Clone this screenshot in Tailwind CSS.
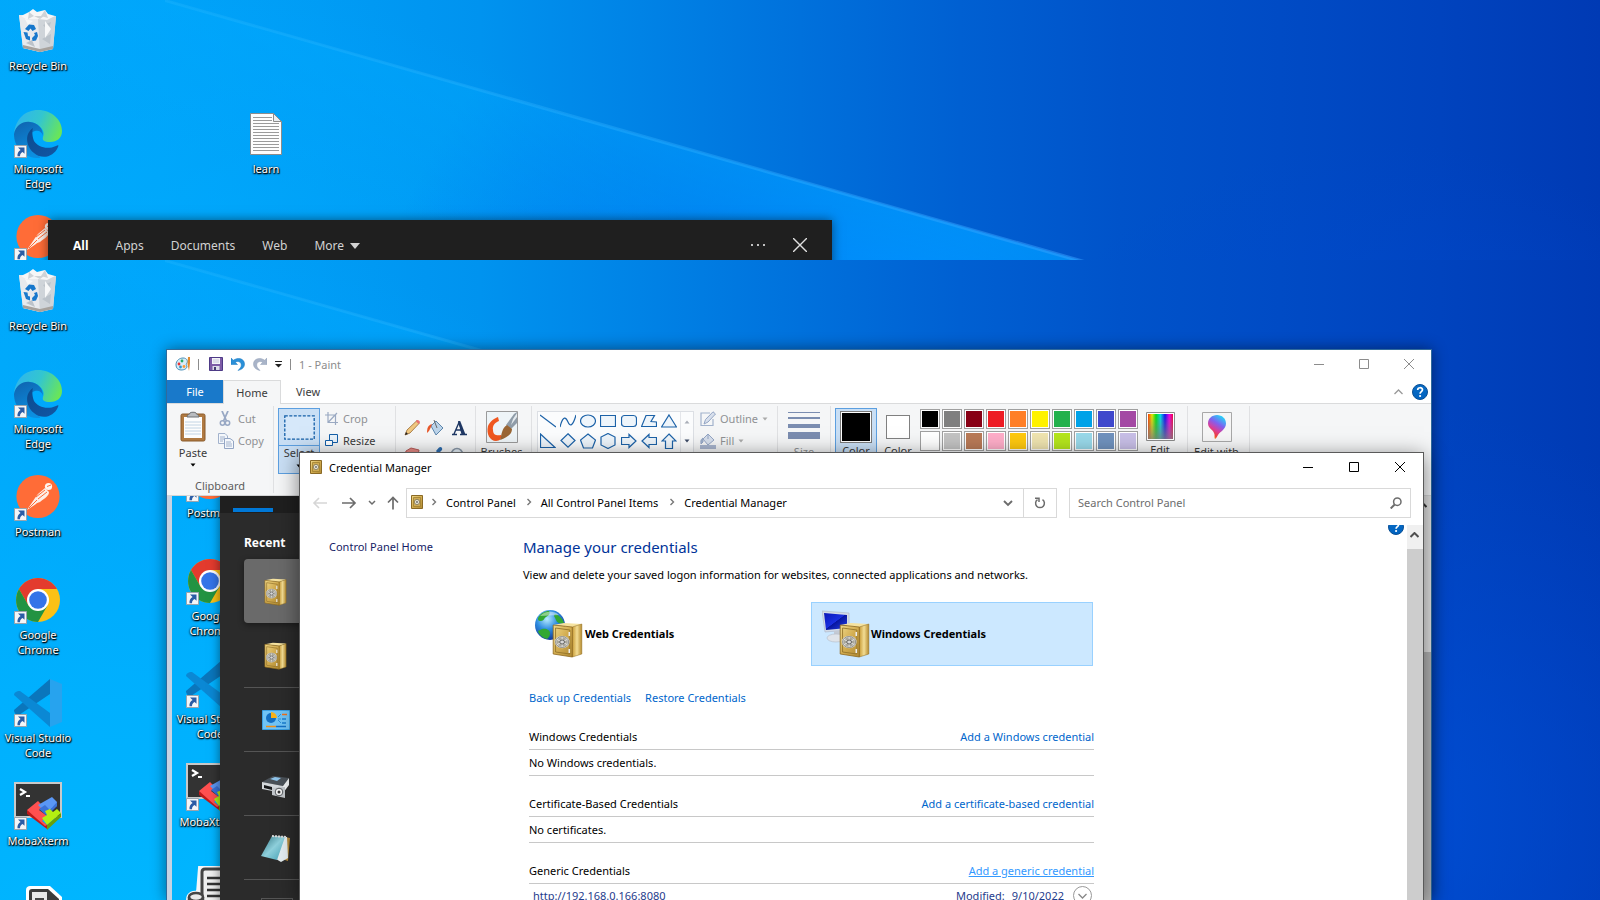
<!DOCTYPE html>
<html lang="en">
<head>
<meta charset="utf-8">
<title>Desktop</title>
<script src="https://cdn.jsdelivr.net/npm/@tailwindcss/browser@4"></script>
</head>
<body class="h-screen overflow-hidden flex flex-col font-['Noto_Sans','Open_Sans',sans-serif] text-[11px] leading-[15px] text-black">

<svg class="absolute size-0" aria-hidden="true">
  <defs>
    <linearGradient id="sky" x1="0" y1="0" x2="1" y2="0">
      <stop offset="0" stop-color="#00a8fa"/><stop offset=".1" stop-color="#00a3f9"/><stop offset=".2" stop-color="#009cf5"/><stop offset=".3" stop-color="#0093ef"/>
      <stop offset=".4" stop-color="#0083e6"/><stop offset=".5" stop-color="#0071dc"/><stop offset=".6" stop-color="#0060d2"/><stop offset=".7" stop-color="#0053ca"/>
      <stop offset=".8" stop-color="#004bc5"/><stop offset=".9" stop-color="#0043be"/><stop offset="1" stop-color="#003ab4"/>
    </linearGradient>
    <radialGradient id="glow" gradientUnits="userSpaceOnUse" cx="900" cy="420" r="540"><stop offset="0" stop-color="#0090ff"/><stop offset=".3" stop-color="#008aff" stop-opacity=".85"/><stop offset=".65" stop-color="#007af8" stop-opacity=".4"/><stop offset="1" stop-color="#0060f0" stop-opacity="0"/></radialGradient>
    <radialGradient id="east" gradientUnits="userSpaceOnUse" cx="1380" cy="560" r="420"><stop offset="0" stop-color="#0050d8" stop-opacity=".8"/><stop offset="1" stop-color="#0048d0" stop-opacity="0"/></radialGradient>
    <radialGradient id="cyan" gradientUnits="userSpaceOnUse" cx="120" cy="720" r="760"><stop offset="0" stop-color="#00b8ff"/><stop offset=".4" stop-color="#00b2ff" stop-opacity=".8"/><stop offset="1" stop-color="#00aaff" stop-opacity="0"/></radialGradient>
    <linearGradient id="ray" x1="0" y1="0" x2="1" y2="0"><stop offset="0" stop-color="#3cc0ff" stop-opacity=".2"/><stop offset=".5" stop-color="#30b0ff" stop-opacity=".4"/><stop offset=".85" stop-color="#38a0ff" stop-opacity=".5"/><stop offset="1" stop-color="#3090ff" stop-opacity="0"/></linearGradient>
    <linearGradient id="below" gradientUnits="userSpaceOnUse" x1="520" y1="100" x2="480" y2="240"><stop offset="0" stop-color="#00aaff" stop-opacity=".4"/><stop offset="1" stop-color="#00aaff" stop-opacity="0"/></linearGradient>
    <linearGradient id="e1" x1="0" y1=".3" x2="1" y2=".6"><stop offset="0" stop-color="#2fb5ee"/><stop offset=".5" stop-color="#33c6cf"/><stop offset="1" stop-color="#6be656"/></linearGradient>
    <linearGradient id="e2" x1="0" y1="0" x2=".4" y2="1"><stop offset="0" stop-color="#0f62ad"/><stop offset="1" stop-color="#0c8fe0"/></linearGradient>
    <linearGradient id="e3" x1="0" y1="0" x2="1" y2="1"><stop offset="0" stop-color="#0b4b8f"/><stop offset="1" stop-color="#1257a5"/></linearGradient>
    <linearGradient id="gold" x1="0" y1="0" x2="1" y2="1"><stop offset="0" stop-color="#f0d888"/><stop offset=".5" stop-color="#d2ac50"/><stop offset="1" stop-color="#b08a34"/></linearGradient>
    <linearGradient id="goldside" x1="0" y1="0" x2="1" y2="0"><stop offset="0" stop-color="#c79a35"/><stop offset=".5" stop-color="#f3dd94"/><stop offset="1" stop-color="#b68b2f"/></linearGradient>
    <radialGradient id="globe" cx=".4" cy=".3" r=".7"><stop offset="0" stop-color="#b8ecff"/><stop offset=".5" stop-color="#2f8de0"/><stop offset="1" stop-color="#123c9c"/></radialGradient>
    <linearGradient id="screen" x1="0" y1="0" x2="1" y2="1"><stop offset="0" stop-color="#0a17b8"/><stop offset=".5" stop-color="#1a2fe0"/><stop offset=".52" stop-color="#0715a0"/><stop offset="1" stop-color="#2842e8"/></linearGradient>
    <linearGradient id="rainbow" x1="0" y1="0" x2="1" y2="0"><stop offset="0" stop-color="#ff3a00"/><stop offset=".16" stop-color="#e8e800"/><stop offset=".32" stop-color="#00e010"/><stop offset=".5" stop-color="#00d8e8"/><stop offset=".68" stop-color="#1010f0"/><stop offset=".85" stop-color="#f000e8"/><stop offset="1" stop-color="#f00040"/></linearGradient>
    <linearGradient id="fade" x1="0" y1="0" x2="0" y2="1"><stop offset="0" stop-color="#808080" stop-opacity="0"/><stop offset="1" stop-color="#808080" stop-opacity=".8"/></linearGradient>
    <linearGradient id="drop" x1=".2" y1="1" x2=".7" y2="0"><stop offset="0" stop-color="#f7b500"/><stop offset=".2" stop-color="#f0413c"/><stop offset=".4" stop-color="#d8409c"/><stop offset=".65" stop-color="#8060f0"/><stop offset="1" stop-color="#20d8f8"/></linearGradient>
    <linearGradient id="note" x1="0" y1="0" x2="1" y2="1"><stop offset="0" stop-color="#2a6f7c"/><stop offset=".5" stop-color="#8fd0dc"/><stop offset="1" stop-color="#3f9fb4"/></linearGradient>
    <linearGradient id="help" x1="0" y1="0" x2="0" y2="1"><stop offset="0" stop-color="#0a6cc4"/><stop offset="1" stop-color="#0062c0"/></linearGradient>
  </defs>
  <symbol id="wallpaper" viewBox="0 0 1600 900" preserveAspectRatio="none">
    <rect width="1600" height="900" fill="url(#sky)"/>
    <rect width="1600" height="900" fill="url(#cyan)"/>
    <rect width="1600" height="900" fill="url(#east)"/>
    <path d="M165 0 L1600 408 V900 H0 V0Z" fill="url(#glow)"/>
    <path d="M165 0 L1078 260 L1000 400 H0 V0Z" fill="url(#below)"/>
    <path d="M165 -1 L1250 307 V311 L165 2Z" fill="url(#ray)"/>
  </symbol>
  <symbol id="shortcut" viewBox="0 0 13 13"><path d="M.5.5h12v12H.5z" fill="#f4f6f8" stroke="#9aa4ad"/><path d="M4 2.500h6.500v6.300L8.600 6.900C6.800 7.800 6 9 6 11.300H3.500C3.200 8 4.400 6 6.600 4.900z" fill="#2b5ca5"/></symbol>
  <symbol id="bin" viewBox="0 0 48 48">
    <path d="M5 8 L42 9 L39 42 L26 45 L9 41Z" fill="#dfe3e7"/><path d="M5 8 L24 12 L26 45 L9 41Z" fill="#e8eaed"/><path d="M24 12 L42 9 L39 42 L26 45Z" fill="#cfd4d9"/>
    <path d="M29 18l8-3-3 9zM28 32l9-5-1 10zM12 36l6-3 3 7z" fill="#bcc3ca"/><path d="M31 14l6 8-6 9zM11 12l8 2-5 4z" fill="#f7f8f9"/>
    <path d="M9 38 L26 42 L39 39 L39 42 L26 45 L9 41Z" fill="#a7a29d"/>
    <path d="M7 9 L15 5 L19 2 L23 5 L31 3 L34 7 L41 9 L33 13 L24 12 L12 12Z" fill="#f5f6f7"/><path d="M15 5l5 4-6 3zM31 3l-4 6 7 2zM20 9l6 3 4-3z" fill="#cdd2d6"/>
    <path d="M11 22l4-4.500 5 .5 2 4-3.500 2-2-2.500-2 2.500zM9.500 25l4 .5.500 3.500 2 .5v4l-4-1.500zM18 31l3-3-1-2 3-1 1 4-2 4.500-3.500.5z" fill="#1878cc"/>
  </symbol>
  <symbol id="edge" viewBox="0 0 48 48">
    <path d="M0 23C2 9 11 0 24 0c14 0 24 10 24 21 0 7-5 11-12 11-6 0-8-2-7-5 2-5-1-9-5-12C16 9 4 12 0 23z" fill="url(#e1)"/>
    <path d="M0 24C2 15 9 11 16 12c8 1 13 6 13 14-1-4-4-6-8-5-7 2-9 13-1 21 3 3 7 5 6 6C11 49 0 38 0 24z" fill="url(#e2)"/>
    <path d="M19 18c-9 6-7 19 1 25 8 7 20 4 24-6 1-2 0-2-2-1-9 4-18 1-22-5-2-5-2-10-1-13z" fill="url(#e3)"/>
  </symbol>
  <symbol id="postman" viewBox="0 0 48 48">
    <circle cx="24" cy="23.500" r="21.600" fill="#ff6c37"/><circle cx="34.500" cy="13.500" r="3.600" fill="#fff4ee"/>
    <path d="M31 15l4 4c0 4-4 6-9 10-2 1-4 1-4 2l-9 6 8-12 3-4z" fill="#fdeee7"/><path d="M22 24l9-7M24 26l9-7M15 35l8-8" stroke="#ff6c37" stroke-width="1"/><path d="M33 13.500l4-1.500" stroke="#ff6c37"/>
  </symbol>
  <symbol id="chrome" viewBox="0 0 48 48">
    <circle cx="24" cy="24" r="22" fill="#fbc116"/><path d="M5 13A22 22 0 0 1 43 13H24L14.500 29.500z" fill="#e33b2e"/>
    <path d="M5 13A22 22 0 0 0 24 46L33.500 29.500H14.500z" fill="#229342"/><circle cx="24" cy="24" r="11" fill="#fff"/><circle cx="24" cy="24" r="8.800" fill="#3474e8"/>
  </symbol>
  <symbol id="vscode" viewBox="0 0 48 48">
    <path d="M36 0V15L5 36C2 36 0 34 0 31z" fill="#0a76bc"/><path d="M36 48V34L6 12C2 12 0 14 0 16z" fill="#0b88d4"/><path d="M36 0L48 5v38L36 48z" fill="#27a3ee"/>
  </symbol>
  <symbol id="moba" viewBox="0 0 48 48">
    <path d="M1 1H47V35H1z" fill="#333" stroke="#c9c9c9" stroke-width="2"/><path d="M6 7l5 3-5 3" fill="none" stroke="#fff" stroke-width="2.200"/><path d="M12 14h4" stroke="#fff" stroke-width="2"/>
    <path d="M13 28V32L33 47V43z" fill="#c01818"/><path d="M13 28L24 19 29 24 25 28 33 34 28 39 33 43 31 44z" fill="#ff5050"/><path d="M24 23L38 15 43 20V24L31 30z" fill="#5a97f5"/><path d="M25 27L31 23 36 28 43 20V24L33 34z" fill="#3a72d8"/>
    <path d="M28 36L33 33 31 29 36 27 39 30 43 27 47 31 33 43z" fill="#b4f011"/><path d="M33 43L47 31V35L33 48z" fill="#6aa008"/>
  </symbol>
  <symbol id="script" viewBox="0 0 48 48">
    <path d="M14 2H44V48H2V34C2 27 8 26 12 27z" fill="#f2f2f2" stroke="#f4f6f8" stroke-width="4"/><path d="M16 48V6C16 4 17 3 19 3H46V48z" fill="#efefef" stroke="#444" stroke-width="3"/>
    <path d="M21 12h20M21 18h20M21 24h20M21 30h20" stroke="#333" stroke-width="2.500"/><ellipse cx="10" cy="31" rx="7" ry="4" fill="#e8e8e8" stroke="#444" stroke-width="2.500"/><path d="M3 31v17M17 31v17" stroke="#444" stroke-width="2.500"/>
  </symbol>
  <symbol id="drive" viewBox="0 0 48 48">
    <path d="M12 5C12 2 14 1 16 1H36L48 12V48H12z" fill="#fff"/><path d="M15 7C15 5 16 4 18 4H34L45 14V48H15z" fill="#3c3c3c"/><path d="M18 7H33V30H18z" fill="#e9e9e9"/><path d="M21 13H30V30H21z" fill="#444"/>
  </symbol>
  <symbol id="textdoc" viewBox="0 0 32 42">
    <path d="M.5.500H23.500L31.500 8.500V41.500H.5z" fill="#fdfdfd" stroke="#8c8c8c"/><path d="M23.500.500V8.500H31.500z" fill="#e9eef2" stroke="#8c8c8c"/>
    <path d="M3 4.500h19M3 7.500h19M3 10.500h26M3 13.500h26M3 16.500h26M3 19.500h26M3 22.500h26M3 25.500h26M3 28.500h26M3 31.500h26M3 34.500h26M3 37.500h26" stroke="#9a9a9a"/>
  </symbol>
  <symbol id="safe" viewBox="0 0 26 36" preserveAspectRatio="none">
    <path d="M1 3L10 1 25 2 17 5z" fill="#f6e3a0"/><path d="M17 5L25 2V32L17 35z" fill="url(#goldside)" stroke="#94701e" stroke-width=".5"/><path d="M1 3L17 5V35L1 32z" fill="url(#gold)" stroke="#8a6417" stroke-width=".7"/><path d="M3 6L15 8V32L3 30z" fill="none" stroke="#94732a" stroke-width=".8"/>
    <circle cx="8.500" cy="20" r="5.500" fill="#a9a79c" stroke="#dededa" stroke-width="1.500"/><path d="M8.500 14v12M3.500 17l10 6M3.500 23l10-6" stroke="#ececec" stroke-width=".8"/><circle cx="8.500" cy="20" r="5.500" fill="none" stroke="#6d6a60" stroke-width=".6"/><circle cx="8.500" cy="20" r="2" fill="#d9d9d9" stroke="#555" stroke-width=".8"/><path d="M14.500 10v4M14.500 27v4" stroke="#eee" stroke-width="1.300"/>
  </symbol>
  <symbol id="vault" viewBox="0 0 14 14"><path d="M1.500.500h11v13h-11z" fill="url(#gold)" stroke="#8a6a26"/><path d="M3.500 2.500h7v9h-7z" fill="#cfab54" stroke="#a08030" stroke-width=".8"/><circle cx="7" cy="7" r="2.600" fill="#e9e4d2" stroke="#7c7355" stroke-width=".8"/><circle cx="7" cy="7" r=".9" fill="#666"/></symbol>
  <symbol id="helpicon" viewBox="0 0 16 16"><circle cx="8" cy="8" r="7.500" fill="url(#help)" stroke="#0a4f94"/><path d="M5.700 6C5.700 3 10.500 3 10.500 5.800 10.500 7.600 8.100 7.600 8.100 9.700" fill="none" stroke="#fff" stroke-width="1.700"/><circle cx="8.100" cy="12" r="1.100" fill="#fff"/></symbol>
  <symbol id="min" viewBox="0 0 10 10"><path d="M0 5.500H10" stroke="currentColor"/></symbol>
  <symbol id="max" viewBox="0 0 10 10"><path d="M.5.500h9v9h-9z" fill="none" stroke="currentColor"/></symbol>
  <symbol id="close" viewBox="0 0 10 10"><path d="M0 0L10 10M10 0L0 10" stroke="currentColor"/></symbol>
  <symbol id="down" viewBox="0 0 6 4"><path d="M.5.500H5.500L3 3.500z" fill="currentColor"/></symbol>
  <symbol id="chev" viewBox="0 0 6 8"><path d="M1.500 1L4.500 4 1.500 7" fill="none" stroke="#777" stroke-width="1.400"/></symbol>
</svg>

<template id="icons">
  <button class="h-[103px] w-[76px] shrink-0 pt-[7px] flex flex-col items-center gap-[3px]"><svg class="size-12"><use href="#bin"/></svg><span>Recycle Bin</span></button>
  <button class="h-[103px] w-[76px] shrink-0 pt-[7px] flex flex-col items-center gap-[3px]"><svg class="size-12"><use href="#edge"/><use href="#shortcut" y="35" width="13" height="13"/></svg><span>Microsoft<br>Edge</span></button>
  <button class="h-[103px] w-[76px] shrink-0 pt-[7px] flex flex-col items-center gap-[3px]"><svg class="size-12"><use href="#postman"/><use href="#shortcut" y="35" width="13" height="13"/></svg><span>Postman</span></button>
  <button class="h-[103px] w-[76px] shrink-0 pt-[7px] flex flex-col items-center gap-[3px]"><svg class="size-12"><use href="#chrome"/><use href="#shortcut" y="35" width="13" height="13"/></svg><span>Google<br>Chrome</span></button>
  <button class="h-[103px] w-[76px] shrink-0 pt-[7px] flex flex-col items-center gap-[3px]"><svg class="size-12"><use href="#vscode"/><use href="#shortcut" y="35" width="13" height="13"/></svg><span>Visual Studio<br>Code</span></button>
  <button class="h-[103px] w-[76px] shrink-0 pt-[7px] flex flex-col items-center gap-[3px]"><svg class="size-12"><use href="#moba"/><use href="#shortcut" y="35" width="13" height="13"/></svg><span>MobaXterm</span></button>
</template>

<!-- Upper desktop with the search flyout -->
<section class="relative h-[260px] shrink-0 overflow-hidden">
  <svg class="absolute inset-x-0 top-0 h-[900px] w-full"><use href="#wallpaper"/></svg>
  <div data-from="0" data-to="3" class="absolute left-0 top-0 flex flex-col text-white [&_span]:[text-shadow:1px_1px_1px_#000,0_1px_2px_#000,0_0_2px_rgba(0,0,0,.7)]"></div>
  <button class="absolute left-[228px] top-[103px] h-[103px] w-[76px] pt-[10px] flex flex-col items-center gap-[6px] text-white [text-shadow:1px_1px_1px_#000,0_1px_2px_#000,0_0_2px_rgba(0,0,0,.7)]"><svg class="h-[42px] w-8"><use href="#textdoc"/></svg><span>learn</span></button>
  <nav class="absolute left-12 top-[220px] w-[784px] h-[60px] bg-[#1f1f1f] shadow-[0_0_10px_rgba(0,0,0,.5)] px-[25px] flex items-start gap-[27px] text-[12px] leading-[51px] text-[#d2d2d2]">
    <button class="font-bold text-white">All</button><button>Apps</button><button>Documents</button><button>Web</button>
    <button class="flex items-center gap-[6px]">More <svg class="h-[6px] w-[10px]" viewBox="0 0 10 6"><path d="M0 0H10L5 6z" fill="#d2d2d2"/></svg></button>
    <button class="ml-auto h-[50px]" aria-label="More options"><svg class="h-[2px] w-4" viewBox="0 0 16 2"><path d="M1 0h2v2H1zM7 0h2v2H7zM13 0h2v2h-2z" fill="#c0c0c0"/></svg></button>
    <button class="h-[50px]" aria-label="Close search"><svg class="size-[14px] text-[#e0e0e0]"><use href="#close"/></svg></button>
  </nav>
</section>

<!-- Lower desktop -->
<section class="relative flex-1 min-h-0 overflow-hidden">
  <svg class="absolute inset-x-0 top-0 h-[900px] w-full"><use href="#wallpaper"/></svg>
  <div class="absolute left-0 top-0 flex flex-col text-white [&_span]:[text-shadow:1px_1px_1px_#000,0_1px_2px_#000,0_0_2px_rgba(0,0,0,.7)]">
    <div data-from="0" data-to="6" class="flex flex-col"></div>
    <button class="h-[103px] w-[76px] pt-[7px] flex flex-col items-center" aria-label="Drive"><svg class="size-12"><use href="#drive"/></svg></button>
  </div>

  <!-- Paint window -->
  <div class="absolute left-[166px] right-[168px] top-[89px] bottom-0 border border-b-0 border-[#2f6a9c] bg-white shadow-[0_0_14px_rgba(0,0,0,.45)] flex flex-col text-[#3b3b3b]">
    <header class="h-[30px] shrink-0 flex items-center pb-[2px] pl-[8px] text-[#8c8c8c]">
      <svg class="size-4" viewBox="0 0 16 16"><path d="M1 9C1 4 5 2 8 2c4 0 5 3 4 5-1 1-1 2 0 3 0 3-3 4-6 4-3 0-5-2-5-5z" fill="#d8ecf8" stroke="#4a90b8"/><circle cx="4" cy="8" r="1.400" fill="#e33"/><circle cx="7" cy="5" r="1.400" fill="#2a6"/><circle cx="5.500" cy="11" r="1.400" fill="#39c"/><circle cx="9" cy="10.500" r="1.400" fill="#f93"/><path d="M13 1h2v6l-1 8-1.500-7z" fill="#e08a30"/></svg>
      <span class="ml-[7px] h-[11px] w-px bg-[#8c8c8c]"></span>
      <button class="ml-[10px]" aria-label="Save"><svg class="size-[14px]" viewBox="0 0 14 14"><path d="M.5.500h13v13H.5z" fill="#7d5ba6" stroke="#4d3a86"/><path d="M3 1h8v6H3z" fill="#f3f3f8"/><path d="M4 3h6M4 5h6" stroke="#c5c5d8"/><path d="M3.500 9h7v4h-7z" fill="#dcdce8"/><path d="M5 10h2v3H5z" fill="#443a70"/></svg></button>
      <button class="ml-[8px]" aria-label="Undo"><svg class="size-[14px]" viewBox="0 0 14 14"><path d="M0 1v6.500h6.500L4.300 5.300C7 3.500 10.300 5 10.300 8c0 2-1.300 3.500-3.300 5.500 4-1 6.500-3 6.500-6.500C13.500 1.500 7 0 2.300 3.200z" fill="#2a90d8" stroke="#1a78c0" stroke-width=".5"/></svg></button>
      <button class="ml-[8px]" aria-label="Redo"><svg class="size-[14px]" viewBox="0 0 14 14"><path d="M14 1v6.500H7.500l2.200-2.200C7 3.500 3.700 5 3.700 8c0 2 1.300 3.500 3.300 5.500C3 12.500.5 10.500.5 7 .5 1.500 7 0 11.700 3.200z" fill="#a9b4c8" stroke="#93a0b8" stroke-width=".5"/></svg></button>
      <button class="ml-[8px]" aria-label="Customize toolbar"><svg class="h-[7px] w-[7px]" viewBox="0 0 7 7"><path d="M0 .5H7" stroke="#222"/><path d="M0 3H7L3.500 6.500z" fill="#222"/></svg></button>
      <span class="ml-[8px] h-[11px] w-px bg-[#8c8c8c]"></span>
      <h1 class="ml-[8px]">1 - Paint</h1>
      <div class="ml-auto flex h-full [&>button]:w-[45px] [&>button]:grid [&>button]:place-items-center">
        <button aria-label="Minimize"><svg class="size-[10px]"><use href="#min"/></svg></button><button aria-label="Maximize"><svg class="size-[10px]"><use href="#max"/></svg></button><button aria-label="Close"><svg class="size-[10px]"><use href="#close"/></svg></button>
      </div>
    </header>
    <div class="h-6 shrink-0 flex border-b border-[#dadbdc]">
      <button class="w-[56px] h-[23px] bg-[#1979ca] text-white">File</button>
      <button class="w-[58px] h-6 bg-[#f5f6f7] border border-b-0 border-[#dadbdc]">Home</button>
      <button class="w-[54px] h-[23px]">View</button>
      <button class="ml-auto" aria-label="Collapse ribbon"><svg class="h-[6px] w-[9px]" viewBox="0 0 9 6"><path d="M.5 5L4.500 1 8.500 5" fill="none" stroke="#999" stroke-width="1.300"/></svg></button>
      <button class="ml-[9px] mr-[3px]" aria-label="Help"><svg class="size-4"><use href="#helpicon"/></svg></button>
    </div>
    <div class="h-[92px] shrink-0 bg-[#f5f6f7] border-b border-[#d4d5d6] py-[2px] flex overflow-hidden [&>*]:shrink-0 [&>*]:border-r [&>*]:border-[#e0e1e3]">
      <!-- Clipboard -->
      <div class="w-[107px] flex flex-col">
        <div class="flex-1 flex pl-2">
          <button class="w-[36px] pt-[5px] flex flex-col items-center">
            <svg class="h-[31px] w-[26px]" viewBox="0 0 26 31"><rect x="1" y="3" width="24" height="27" rx="1.500" fill="#b07a42" stroke="#8a5a2a"/><path d="M4 6H22V27H4z" fill="#fdfdfd"/><path d="M5 11h16M5 14h16M5 17h16M5 20h16M5 23h16" stroke="#c2d4e4"/><path d="M7 6C7 3 10 4 10 2c0-1 6-1 6 0 0 2 3 1 3 4z" fill="#b9bcc0" stroke="#6d7074"/></svg>
            <span class="mt-[3px]">Paste</span><svg class="mt-[3px] h-[4px] w-[6px] text-black"><use href="#down"/></svg>
          </button>
          <div class="ml-[7px] pt-[4px] flex flex-col gap-[5px] text-[#8f9194]">
            <button class="flex items-center gap-[6px] h-[17px]"><svg class="h-[15px] w-[14px]" viewBox="0 0 14 15"><path d="M4 0L8.500 10M10 0L5.500 10" stroke="#98a8c4" stroke-width="1.800"/><circle cx="4.500" cy="12" r="2.200" fill="none" stroke="#98a8c4" stroke-width="1.500"/><circle cx="9.500" cy="12" r="2.200" fill="none" stroke="#98a8c4" stroke-width="1.500"/></svg>Cut</button>
            <button class="flex items-center gap-[4px] h-[17px]"><svg class="size-4" viewBox="0 0 16 16"><path d="M.5.500H7L9.500 3V10.500H.5z" fill="#f4f7fb" stroke="#a2b2cc"/><path d="M2 4h5M2 6h5M2 8h3" stroke="#a2b2cc"/><path d="M6.500 5.500H12L15.500 8V15.500H6.500z" fill="#f4f7fb" stroke="#93a5c4"/><path d="M8 9h5M8 11h6M8 13h6" stroke="#a2b2cc"/></svg>Copy</button>
          </div>
        </div>
        <div class="text-center text-[#5c5c5c]">Clipboard</div>
      </div>
      <!-- Image -->
      <div class="w-[122px] flex pl-1 pt-[2px]">
        <button class="h-[66px] w-[42px] border border-[#5c9fe0] bg-[#c9dff5] flex flex-col items-center">
          <span class="h-[37px] shrink-0 w-full border-b border-[#5c9fe0] grid place-items-center"><svg class="h-[25px] w-[31px]" viewBox="0 0 31 25"><path d="M.8.800H30.200V24.200H.8z" fill="#d6e8fa" stroke="#145fa8" stroke-width="1.300" stroke-dasharray="3 1.500"/></svg></span>
          <span class="-mt-px">Select</span><svg class="mt-[4px] h-[4px] w-[6px] text-black"><use href="#down"/></svg>
        </button>
        <div class="ml-[5px] pt-[2px] flex flex-col gap-[5px]">
          <button class="flex items-center gap-[5px] h-[17px] text-[#8f9194]"><svg class="size-[13px]" viewBox="0 0 13 13"><path d="M3 0V10.500H13M0 3H10.500V13M3.500 10L12 1" fill="none" stroke="#9aa9c2" stroke-width="1.200"/></svg>Crop</button>
          <button class="flex items-center gap-[5px] h-[17px]"><svg class="size-[13px]" viewBox="0 0 13 13"><path d="M4.500.500H12.500V8.500H4.500z" fill="#eaf3fb" stroke="#145fa8"/><path d="M.5 6.500H7.500V11.500H.5z" fill="#fff" stroke="#145fa8"/></svg>Resize</button>
        </div>
      </div>
      <!-- Tools -->
      <div class="w-[80px] px-1 pt-[13px] grid grid-cols-3 gap-y-[9px] content-start justify-items-center [&_svg]:size-[18px]">
        <button aria-label="Pencil"><svg viewBox="0 0 18 18"><path d="M2 16L4 11 14 1.500 16.500 4 7 14z" fill="#f0c880" stroke="#9a6a30" stroke-width=".8"/><path d="M13 2.500L15.500 5 17 3C17 2 15 .5 14 1z" fill="#e87070"/><path d="M2 16l1-3 2 2z" fill="#222"/></svg></button>
        <button aria-label="Fill"><svg viewBox="0 0 18 18"><path d="M5 7L10 2 17 9 10 16z" fill="#bcd4ea" stroke="#5d86ac"/><path d="M8 1l3 8" stroke="#666"/><path d="M6 5C2 6 1 9 1 14l2-2 2-4z" fill="#e8582a"/></svg></button>
        <button aria-label="Text"><svg viewBox="0 0 18 18"><path d="M2 15.500H7M10 15.500H17M4 15L9.200 3M8.500 3L13.500 15M5.500 11H11" fill="none" stroke="#1f3864" stroke-width="1.400"/><path d="M8 2h2.200L15.500 15.500H11.500z" fill="#1f3864"/></svg></button>
        <button aria-label="Eraser"><svg viewBox="0 0 18 18"><path d="M3 5L8 2 16 4 15 9 6 11 2 9z" fill="#e78a84" stroke="#b85a58"/></svg></button>
        <button aria-label="Color picker"><svg viewBox="0 0 18 18"><path d="M10 5L13 1.500C15 0 17 2 16 4L13 7zM4 14L11 5l3 3z" fill="#2d6cae"/></svg></button>
        <button aria-label="Magnifier"><svg viewBox="0 0 18 18"><circle cx="7" cy="8" r="5.500" fill="#e4eef6" stroke="#8a98a8" stroke-width="1.500"/></svg></button>
      </div>
      <!-- Brushes -->
      <button class="w-[56px] pt-[5px] pr-1 flex flex-col items-center">
        <svg class="size-8" viewBox="0 0 32 32"><path d="M.5.500h31v31H.5z" fill="#eef4f7" stroke="#9a9a9a"/><path d="M12 6C9 7 4 10 2 15c-2 8 2 15 8 15 4 0 6-3 5-6-4 1-8 0-8-5-1-5 3-8 6-9z" fill="#f0571f"/><path d="M28 3L31 1V12L25 18 20 14z" fill="#8f9ca8"/><path d="M27 8l4-6v4l-6 8z" fill="#e4eaee"/><path d="M21 14l5 4c0 5-4 8-12 11 2-5 1-11 7-15z" fill="#9a6634"/></svg>
        <span class="mt-px">Brushes</span>
      </button>
      <!-- Shapes -->
      <div class="w-[246px] flex pl-[5px] pt-[5px] overflow-hidden">
        <div class="h-[60px] w-[157px] border border-[#dcdfe4] bg-[#fbfcfd] flex">
          <div class="w-[142px] pr-px pt-px grid grid-cols-7 gap-y-[4px] content-start justify-items-center text-[#1c62a8] [&_svg]:size-4 [&_svg]:fill-[#eef5fb] [&_svg]:stroke-current [&_svg]:stroke-[1.2]">
            <button aria-label="Line"><svg viewBox="0 0 16 16"><path d="M0 2L16 14"/></svg></button>
            <button aria-label="Curve"><svg viewBox="0 0 16 16"><path d="M0 14C3 2 6 4 8 9S13 13 16 2" class="fill-none"/></svg></button>
            <button aria-label="Oval"><svg viewBox="0 0 16 16"><ellipse cx="8" cy="8" rx="7.500" ry="6"/></svg></button>
            <button aria-label="Rectangle"><svg viewBox="0 0 16 16"><path d="M.5 2.500h15v11H.5z"/></svg></button>
            <button aria-label="Rounded rectangle"><svg viewBox="0 0 16 16"><rect x=".5" y="2.500" width="15" height="11" rx="3"/></svg></button>
            <button aria-label="Polygon"><svg viewBox="0 0 16 16"><path d="M5 2.500H13.500L10 8.500 15.500 9V13.500H.5z"/></svg></button>
            <button aria-label="Triangle"><svg viewBox="0 0 16 16"><path d="M8 2L15.500 14H.5z"/></svg></button>
            <button aria-label="Right triangle"><svg viewBox="0 0 16 16"><path d="M.5 1V14.500H15z"/></svg></button>
            <button aria-label="Diamond"><svg viewBox="0 0 16 16"><path d="M8 .8L15 7.500 8 14.200 1 7.500z"/></svg></button>
            <button aria-label="Pentagon"><svg viewBox="0 0 16 16"><path d="M8 1L15.500 7 12.500 15H3.500L.5 7z"/></svg></button>
            <button aria-label="Hexagon"><svg viewBox="0 0 16 16"><path d="M8 .5L15 4V12L8 15.500 1 12V4z"/></svg></button>
            <button aria-label="Right arrow"><svg viewBox="0 0 16 16"><path d="M.5 4.500H8V1.500L15 8 8 14.500V11.500H.5z"/></svg></button>
            <button aria-label="Left arrow"><svg viewBox="0 0 16 16"><path d="M15.500 4.500H8V1.500L1 8 8 14.500V11.500H15.500z"/></svg></button>
            <button aria-label="Up arrow"><svg viewBox="0 0 16 16"><path d="M8 1L15 8H11.500V15.500H4.500V8H1z"/></svg></button>
          </div>
          <div class="flex-1 border-l border-[#e4e6ea] flex flex-col items-center pt-[8px] gap-[15px]">
            <button class="leading-[4px] text-[#a9aeb8]" aria-label="Scroll shapes up"><svg class="h-[4px] w-[6px] rotate-180"><use href="#down"/></svg></button>
            <button class="leading-[4px] text-[#3c4a66]" aria-label="Scroll shapes down"><svg class="h-[4px] w-[6px]"><use href="#down"/></svg></button>
          </div>
        </div>
        <div class="ml-[6px] -mt-px flex flex-col gap-[5px] text-[#8f9194]">
          <button class="flex items-center gap-[4px] h-[17px]"><svg class="size-4" viewBox="0 0 16 16"><path d="M10 2H1V14.500H13V8" fill="none" stroke="#a2b2cc" stroke-width="1.200"/><path d="M4 13L5.500 8.500 13 .8 15.500 3 8 11z" fill="#d7dfec" stroke="#93a5c4"/></svg>Outline <svg class="h-[4px] w-[6px] text-[#aaa]"><use href="#down"/></svg></button>
          <button class="flex items-center gap-[4px] h-[17px]"><svg class="size-4" viewBox="0 0 16 16"><path d="M3 6L8 1 14 7 8 12z" fill="#d7dfec" stroke="#93a5c4"/><path d="M8 1v5M3 5C0 7 1 9 1 11l2-2z" stroke="#93a5c4" fill="#a2b2cc"/><path d="M0 12H16V16H0z" fill="#a9b6cf"/></svg>Fill <svg class="h-[4px] w-[6px] text-[#aaa]"><use href="#down"/></svg></button>
        </div>
      </div>
      <!-- Size -->
      <button class="w-[53px] pt-[6px] flex flex-col items-center text-[#8f9194]"><svg class="h-[28px] w-8" viewBox="0 0 32 28"><path d="M0 0h32v1H0zM0 5h32v2H0zM0 12h32v4H0zM0 20h32v7H0z" fill="#7b8db0"/></svg><span class="mt-[4px]">Size</span></button>
      <!-- Colors -->
      <div class="w-[357px] flex pl-1 pt-[2px]">
        <button class="h-[66px] w-[42px] border border-[#5c9fe0] bg-[#c9dff5] flex flex-col items-center"><span class="mt-[2px] size-8 border border-[#7a7a7a] p-px bg-white"><span class="block size-full bg-black"></span></span><span>Color</span></button>
        <button class="w-[42px] flex flex-col items-center"><span class="mt-[7px] size-6 border border-[#808080] bg-white"></span><span class="mt-[4px]">Color</span></button>
        <div class="ml-px pt-px grid grid-cols-10 gap-[2px] content-start [&>button]:size-5 [&>button]:border [&>button]:border-[#a0a0a0] [&>button]:shadow-[inset_0_0_0_1px_#fff]">
          <button aria-label="Black" class="bg-black"></button><button aria-label="Gray" class="bg-[#7f7f7f]"></button><button aria-label="Dark red" class="bg-[#880015]"></button><button aria-label="Red" class="bg-[#ed1c24]"></button><button aria-label="Orange" class="bg-[#ff7f27]"></button><button aria-label="Yellow" class="bg-[#fff200]"></button><button aria-label="Green" class="bg-[#22b14c]"></button><button aria-label="Turquoise" class="bg-[#00a2e8]"></button><button aria-label="Indigo" class="bg-[#3f48cc]"></button><button aria-label="Purple" class="bg-[#a349a4]"></button>
          <button aria-label="White" class="bg-white"></button><button aria-label="Light gray" class="bg-[#c3c3c3]"></button><button aria-label="Brown" class="bg-[#b97a57]"></button><button aria-label="Rose" class="bg-[#ffaec9]"></button><button aria-label="Gold" class="bg-[#ffc90e]"></button><button aria-label="Light yellow" class="bg-[#efe4b0]"></button><button aria-label="Lime" class="bg-[#b5e61d]"></button><button aria-label="Light turquoise" class="bg-[#99d9ea]"></button><button aria-label="Blue gray" class="bg-[#7092be]"></button><button aria-label="Lavender" class="bg-[#c8bfe7]"></button>
        </div>
        <button class="ml-[7px] w-[30px] pt-[4px] flex flex-col items-center"><svg class="h-[29px] w-[29px]" viewBox="0 0 29 29"><path d="M.5.500h28v28H.5z" fill="#fff" stroke="#8a8a8a"/><path d="M2 2h25v25H2z" fill="url(#rainbow)"/><path d="M2 2h25v25H2z" fill="url(#fade)"/></svg><span class="mt-px">Edit</span></button>
      </div>
      <!-- Paint 3D -->
      <button class="w-[62px] pr-1 pt-[6px] flex flex-col items-center whitespace-nowrap"><svg class="size-[30px]" viewBox="0 0 30 30"><path d="M.5.500h29v29H.5z" fill="#f6f6f6" stroke="#a8a8a8"/><path d="M15 3c5 0 9 3.500 9 8.500 0 6-6 8-8 11.500-.8 1.500-1.500 3-3 4-.8-1.500-.3-3-.5-4.500C12 18 6 16.500 6 11.500 6 6.500 10 3 15 3z" fill="url(#drop)"/></svg><span class="mt-[2px]">Edit with</span></button>
    </div>
    <!-- Canvas holding a picture of a desktop -->
    <div class="flex-1 min-h-0 flex bg-[#c8d3e3] pl-[5px]">
      <div class="relative flex-1 overflow-hidden">
        <div class="absolute inset-x-0 -top-[255px] h-[900px]">
          <svg class="absolute inset-0 size-full"><use href="#wallpaper"/></svg>
          <div class="absolute left-0 top-[206px] flex flex-col text-white [&_span]:[text-shadow:1px_1px_1px_#000,0_1px_2px_#000,0_0_2px_rgba(0,0,0,.7)]">
            <div data-from="2" data-to="6" class="flex flex-col"></div>
            <button class="h-[103px] w-[76px] pt-[7px] flex flex-col items-center" aria-label="Script"><svg class="size-12"><use href="#script"/></svg></button>
          </div>
          <div class="absolute left-12 top-[220px] bottom-0 w-[784px] bg-[#2b2b2b] shadow-[0_0_10px_rgba(0,0,0,.5)] text-white">
            <div class="h-[52px] bg-[#1f1f1f] pl-[13px] flex items-end pb-px"><span class="h-1 w-10 bg-[#0078d7]"></span></div>
            <div class="pl-6 pt-[21px]">
              <h2 class="font-bold text-[12px] leading-[18px]">Recent</h2>
              <div class="mt-[7px] flex flex-col [&>button]:h-16 [&>button]:pl-[17px] [&>button]:flex [&>button]:items-center">
                <button class="rounded bg-[#6a6a6a] shadow-[0_2px_6px_rgba(0,0,0,.4)]" aria-label="Credential Manager"><svg class="ml-[3px] mt-[2px] h-[28px] w-[23px]"><use href="#safe"/></svg></button>
                <button class="mt-px border-b border-[#555]" aria-label="Credential Manager"><svg class="ml-[3px] h-[28px] w-[23px]"><use href="#safe"/></svg></button>
                <button class="border-b border-[#555]" aria-label="Control Panel"><svg class="ml-[1px] h-[20px] w-[28px]" viewBox="0 0 28 20"><path d="M.5.500h27v19H.5z" fill="#70c4f6" stroke="#3aa0e4"/><circle cx="9" cy="8" r="5" fill="#1470c4"/><path d="M9 8V2a6 6 0 0 1 6 6z" fill="#f9b21a"/><path d="M16 7l3-3M16 9h3M16 10l3 3" stroke="#2d8fd8"/><path d="M20 4.500h5" stroke="#f2701a" stroke-width="1.500"/><path d="M20 9h4M20 13h4" stroke="#1a7ed0" stroke-width="1.500"/><path d="M4 16.500h10" stroke="#f09018" stroke-width="1.500"/><path d="M14 16.500h10" stroke="#1470c4" stroke-width="1.500"/></svg></button>
                <button class="border-b border-[#555]" aria-label="Devices and Printers"><svg class="mt-[6px] h-[24px] w-[28px]" viewBox="0 0 28 24"><path d="M1 7L12 1 28 3 22 11z" fill="#4a5158"/><path d="M9 4l5-2 6 1-4 3z" fill="#8fc4ea"/><path d="M1 7L22 11V18L1 14z" fill="#d4d8dc"/><path d="M22 11L28 3V10L22 18z" fill="#f1f3f4"/><path d="M3 10l8 2v3l-8-2z" fill="#16181a"/><path d="M11 13L24 12V23L11 20z" fill="#c3c7cb"/><circle cx="18" cy="17" r="3.800" fill="#f4f4f4" stroke="#55595d"/><circle cx="18" cy="17" r="1.500" fill="#333"/></svg></button>
                <button class="border-b border-[#555]" aria-label="Notepad"><svg class="h-[28px] w-[30px]" viewBox="0 0 30 28"><path d="M24 3l5 1-2 23-3-1z" fill="#b58a3c"/><path d="M12 2L26 3 27 24 20 28 10 22z" fill="#e4edf0"/><path d="M11 2L24 3 16 26 0 22z" fill="url(#note)"/><path d="M11 2l14 1" stroke="#d8d8d8" stroke-width="2" stroke-dasharray="2 1"/></svg></button>
                <button aria-label="Recent item"><span class="mt-1 size-8 border border-[#555]"></span></button>
              </div>
            </div>
          </div>
        </div>
      </div>
      <div class="w-[17px] bg-[#e2e2e2] flex flex-col">
        <button class="h-[18px] grid place-items-center" aria-label="Scroll up"><svg class="h-[6px] w-[9px]" viewBox="0 0 9 6"><path d="M.5 5L4.500 1 8.500 5" fill="none" stroke="#333" stroke-width="2"/></svg></button>
        <span class="mt-[138px] flex-1 bg-[#b4b4b4]"></span>
      </div>
    </div>
  </div>

  <!-- Credential Manager window -->
  <div class="absolute left-[299px] right-[176px] top-[192px] bottom-0 border border-b-0 border-[#5a5a5a] bg-white shadow-[0_4px_20px_rgba(0,0,0,.5)] flex flex-col">
    <header class="h-[30px] shrink-0 flex items-center pb-[2px] pl-[9px]">
      <svg class="size-[14px]"><use href="#vault"/></svg><h1 class="ml-[6px]">Credential Manager</h1>
      <div class="ml-auto flex h-full [&>button]:w-[46px] [&>button]:grid [&>button]:place-items-center">
        <button aria-label="Minimize"><svg class="size-[10px]"><use href="#min"/></svg></button><button aria-label="Maximize"><svg class="size-[10px]"><use href="#max"/></svg></button><button aria-label="Close"><svg class="size-[10px]"><use href="#close"/></svg></button>
      </div>
    </header>
    <div class="h-[42px] shrink-0 flex items-center pb-[2px] pl-[12px] pr-3">
      <button aria-label="Back"><svg class="h-3 w-4" viewBox="0 0 16 12"><path d="M15 6H2M7 1L2 6 7 11" fill="none" stroke="#d6d6d6" stroke-width="1.600"/></svg></button>
      <button class="ml-[13px]" aria-label="Forward"><svg class="h-3 w-4" viewBox="0 0 16 12"><path d="M1 6H13M9 1L14 6 9 11" fill="none" stroke="#6c6c6c" stroke-width="1.700"/></svg></button>
      <button class="ml-[11px]" aria-label="Recent locations"><svg class="h-2 w-2" viewBox="0 0 8 8"><path d="M1 2L4 5 7 2" fill="none" stroke="#6c6c6c" stroke-width="1.500"/></svg></button>
      <button class="ml-[9px]" aria-label="Up"><svg class="h-[14px] w-4" viewBox="0 0 16 14"><path d="M8 13.500V2M3 6.500L8 1.500 13 6.500" fill="none" stroke="#6c6c6c" stroke-width="1.700"/></svg></button>
      <div class="ml-[5px] flex-1 h-[30px] border border-[#d9d9d9] flex items-center">
        <div class="flex items-center pb-[2px]">
        <svg class="ml-[3px] size-[14px]"><use href="#vault"/></svg><svg class="ml-[7px] h-2 w-[6px]"><use href="#chev"/></svg>
        <a href="#" class="ml-[9px]">Control Panel</a><svg class="ml-[10px] h-2 w-[6px]"><use href="#chev"/></svg>
        <a href="#" class="ml-[9px]">All Control Panel Items</a><svg class="ml-[11px] h-2 w-[6px]"><use href="#chev"/></svg>
        <a href="#" class="ml-[9px]">Credential Manager</a>
        </div>
        <button class="ml-auto mr-[10px]" aria-label="Previous locations"><svg class="h-[8px] w-[10px]" viewBox="0 0 10 8"><path d="M1 2L5 6 9 2" fill="none" stroke="#6c6c6c" stroke-width="1.900"/></svg></button>
        <button class="h-full w-[33px] border-l border-[#d9d9d9] grid place-items-center" aria-label="Refresh"><svg class="size-[12px]" viewBox="0 0 12 12"><path d="M3.500 2.600A4.400 4.400 0 1 0 8.500 2.600" fill="none" stroke="#6c6c6c" stroke-width="1.500"/><path d="M1 1.200H5V5" fill="none" stroke="#6c6c6c" stroke-width="1.500"/></svg></button>
      </div>
      <label class="ml-3 w-[342px] h-[30px] border border-[#d9d9d9] flex items-center px-2">
        <input type="text" placeholder="Search Control Panel" aria-label="Search Control Panel" class="flex-1 min-w-0 pb-[2px] outline-none placeholder:text-[#6d6d6d]">
        <svg class="size-[12px]" viewBox="0 0 12 12"><circle cx="7.300" cy="4.700" r="3.700" fill="none" stroke="#6c6c6c" stroke-width="1.500"/><path d="M4.700 7.500L.7 11.500" stroke="#6c6c6c" stroke-width="1.900"/></svg>
      </label>
    </div>
    <div class="flex-1 min-h-0 flex overflow-hidden">
      <aside class="w-[223px] shrink-0 pl-[29px] pt-[14px]"><a href="#" class="text-[#151c66]">Control Panel Home</a></aside>
      <main class="w-[571px]">
        <h2 class="pt-[11px] text-[15px] leading-[22px] text-[#003399]">Manage your credentials</h2>
        <p class="mt-[9px]">View and delete your saved logon information for websites, connected applications and networks.</p>
        <div class="mt-[20px] pr-px flex gap-[5px] font-bold [&>button>span]:pb-[2px]">
          <button class="h-16 flex-1 pl-[12px] flex items-center gap-[2px]">
            <svg class="size-12" viewBox="0 0 48 48"><circle cx="15" cy="15" r="15" fill="url(#globe)"/><path d="M3 8C6 3 10 1 14 1c2 3-1 5-3 6s-2 4-5 4-3-1-3-3zM20 4c4 1 8 5 9 9-4 1-7 0-8-3s-3-4-1-6zM7 19c4-1 8 1 8 4s-1 4-3 6c-4-1-8-4-9-8z" fill="#32a832"/><path d="M5 6c4-5 14-6 19-1-6 0-13 1-19 1z" fill="#fff" opacity=".45"/><use href="#safe" x="17" y="12" width="31" height="36"/></svg><span>Web Credentials</span>
          </button>
          <button class="h-16 w-[282px] pl-[10px] flex items-center gap-px bg-[#cce8ff] border border-[#99d1ff]">
            <svg class="size-12" viewBox="0 0 48 48"><path d="M0 1L27 3V20L3 22z" fill="#d4dbe6" stroke="#aab4c4" stroke-width=".6"/><path d="M2 3L25 5V18L4 20z" fill="url(#screen)"/><path d="M12 21h6v5h-6z" fill="#c3cad4"/><ellipse cx="14" cy="28" rx="9" ry="4" fill="#dfe4ea" stroke="#b3bbc6" stroke-width=".6"/><use href="#safe" x="17" y="12" width="31" height="36"/></svg><span>Windows Credentials</span>
          </button>
        </div>
        <div class="pl-[6px]">
          <div class="mt-[24px] flex gap-[14px] text-[#0066cc]"><a href="#">Back up Credentials</a><a href="#">Restore Credentials</a></div>
          <section class="mt-[24px]"><div class="flex justify-between pb-[5px] border-b border-[#c8c8c8]"><h3>Windows Credentials</h3><a href="#" class="text-[#0066cc]">Add a Windows credential</a></div><p class="pt-[5px] pb-[5px] border-b border-[#c8c8c8]">No Windows credentials.</p></section>
          <section class="mt-[20px]"><div class="flex justify-between pb-[5px] border-b border-[#c8c8c8]"><h3>Certificate-Based Credentials</h3><a href="#" class="text-[#0066cc]">Add a certificate-based credential</a></div><p class="pt-[5px] pb-[5px] border-b border-[#c8c8c8]">No certificates.</p></section>
          <section class="mt-[20px]"><div class="flex justify-between pb-[5px] border-b border-[#c8c8c8]"><h3>Generic Credentials</h3><a href="#" class="text-[#3399ff] underline">Add a generic credential</a></div>
            <button class="w-full pt-[2px] pl-[4px] flex items-center text-[#1f3c8c]"><span>http://192.168.0.166:8080</span><span class="ml-auto">Modified:</span><span class="ml-[7px]">9/10/2022</span><svg class="ml-[9px] mr-[2px] size-[19px]" viewBox="0 0 19 19"><circle cx="9.500" cy="9.500" r="9" fill="#fff" stroke="#999"/><path d="M5.500 8L9.500 12 13.500 8" fill="none" stroke="#888" stroke-width="1.300"/></svg></button>
          </section>
        </div>
      </main>
      <button class="ml-auto mr-[3px] -mt-[6px] self-start" aria-label="Help"><svg class="size-4"><use href="#helpicon"/></svg></button>
      <div class="w-4 bg-[#f0f0f0] flex flex-col">
        <button class="h-6 pt-[7px] pr-px shrink-0 flex justify-center items-start" aria-label="Scroll up"><svg class="h-[6px] w-[9px]" viewBox="0 0 9 6"><path d="M.5 5L4.500 1 8.500 5" fill="none" stroke="#505050" stroke-width="2"/></svg></button>
        <span class="flex-1 bg-[#cdcdcd]"></span>
      </div>
    </div>
  </div>
</section>

<script>
  const icons = document.getElementById('icons');
  document.querySelectorAll('[data-from]').forEach(column => {
    const copies = icons.content.cloneNode(true).children;
    column.append(...[...copies].slice(+column.dataset.from, +column.dataset.to));
  });
</script>
</body>
</html>
